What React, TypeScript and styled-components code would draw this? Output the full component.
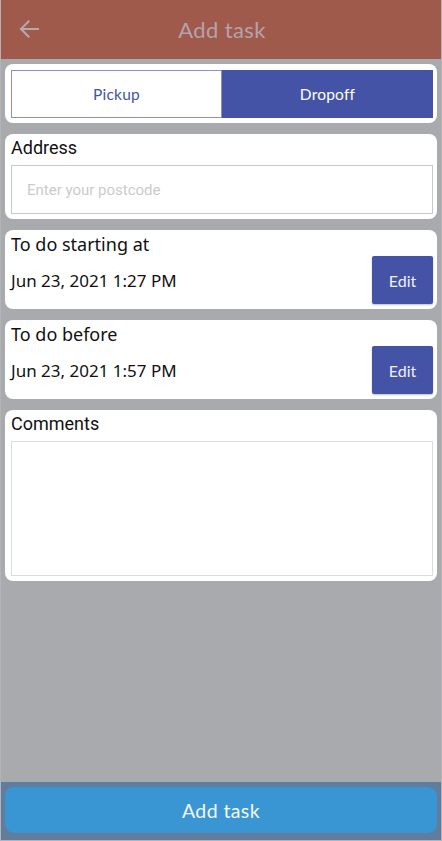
import React from "react";
import styled, { createGlobalStyle } from "styled-components";

const Global = createGlobalStyle`
  html, body { margin: 0; padding: 0; background: #a9aaad; }
  * { box-sizing: border-box; }
`;

const Frame = styled.div`
  width: 442px;
  height: 841px;
  display: flex;
  flex-direction: column;
  background: #a9aaad;
  border-left: 1px solid #b4b3b6;
  border-right: 1px solid #b4b3b6;
  border-bottom: 1px solid #b4b3b6;
`;

const Header = styled.header`
  height: 59px;
  flex: none;
  background: #a05a4b;
  display: flex;
  align-items: center;
  justify-content: center;
  position: relative;
`;

const BackButton = styled.button`
  position: absolute;
  left: 16px;
  top: 17px;
  width: 24px;
  height: 24px;
  padding: 0;
  border: none;
  background: transparent;
  display: flex;
  align-items: center;
  justify-content: center;
`;

const Title = styled.h1`
  margin: 0 0 0 2px;
  font-family: "Lato", "Open Sans", sans-serif;
  font-weight: 400;
  font-size: 22px;
  letter-spacing: 0.4px;
  color: #b3a3ac;
`;

const Content = styled.main`
  flex: 1;
  display: flex;
  flex-direction: column;
  gap: 11px;
  padding: 5px 4px 0 4px;
`;

const Card = styled.section<{ $h: number }>`
  background: #fff;
  border-radius: 8px;
  height: ${(p) => p.$h}px;
  padding: 6px 4px 5px 6px;
  display: flex;
  flex-direction: column;
`;

const Segmented = styled.div`
  display: grid;
  grid-template-columns: 1fr 1fr;
  height: 48px;
`;

const Segment = styled.button<{ $active?: boolean }>`
  border: 1px solid ${(p) => (p.$active ? "#4453a6" : "#8a90cf")};
  background: ${(p) => (p.$active ? "#4453a6" : "#fff")};
  color: ${(p) => (p.$active ? "#fff" : "#4453a6")};
  font-family: "Lato", "Open Sans", sans-serif;
  font-size: 15.5px;
  font-weight: 400;
  letter-spacing: 0.2px;
  padding: 0;
`;

const Label = styled.div<{ $font?: string }>`
  font-family: ${(p) => p.$font || "Roboto"}, sans-serif;
  font-size: 18px;
  color: #111;
  line-height: 20px;
  height: 20px;
  margin-top: -2px;
`;

const Input = styled.input`
  margin-top: 7px;
  height: 49px;
  border: 1px solid #c9c9c9;
  padding: 0 15px;
  font-family: Roboto, sans-serif;
  font-size: 15px;
  color: #222;
  outline: none;
  &::placeholder { color: #cbcbcb; }
`;

const DateRow = styled.div`
  display: flex;
  align-items: center;
  justify-content: space-between;
  margin-top: 2px;
`;

const DateText = styled.div`
  font-family: "Noto Sans", sans-serif;
  font-size: 17px;
  color: #111;
`;

const EditButton = styled.button`
  width: 61px;
  height: 48px;
  border: none;
  border-radius: 2px;
  background: #4453a6;
  color: #eef;
  font-family: "Lato", "Open Sans", sans-serif;
  font-size: 16px;
  box-shadow: 0 1px 2px rgba(0, 0, 0, 0.25);
  padding: 0;
`;

const TextArea = styled.textarea`
  margin-top: 7px;
  height: 135px;
  border: 1px solid #dcdcdc;
  resize: none;
  outline: none;
  font-family: Roboto, sans-serif;
  font-size: 15px;
`;

const Footer = styled.footer`
  height: 58px;
  flex: none;
  background: #617d9e;
  padding: 5px 4px;
`;

const SubmitButton = styled.button`
  width: 100%;
  height: 46px;
  border: none;
  border-radius: 9px;
  background: #3996d3;
  color: #f4f8fc;
  font-family: "Lato", "Open Sans", sans-serif;
  font-size: 19.5px;
  letter-spacing: 0.4px;
  padding: 0;
`;

export default function App() {
  return (
    <>
      <Global />
      <Frame>
        <Header>
          <BackButton aria-label="Back">
            <svg width="20" height="18" viewBox="0 0 20 18" fill="none">
              <path d="M19 9H2M9.5 1.5L2 9l7.5 7.5" stroke="#b7a8b0" strokeWidth="2" strokeLinecap="square" />
            </svg>
          </BackButton>
          <Title>Add task</Title>
        </Header>
        <Content>
          <Card $h={59}>
            <Segmented>
              <Segment>Pickup</Segment>
              <Segment $active>Dropoff</Segment>
            </Segmented>
          </Card>
          <Card $h={85}>
            <Label>Address</Label>
            <Input placeholder="Enter your postcode" />
          </Card>
          <Card $h={79}>
            <Label $font='"Noto Sans"'>To do starting at</Label>
            <DateRow>
              <DateText>Jun 23, 2021 1:27 PM</DateText>
              <EditButton>Edit</EditButton>
            </DateRow>
          </Card>
          <Card $h={79}>
            <Label $font='"Noto Sans"'>To do before</Label>
            <DateRow>
              <DateText>Jun 23, 2021 1:57 PM</DateText>
              <EditButton>Edit</EditButton>
            </DateRow>
          </Card>
          <Card $h={171}>
            <Label>Comments</Label>
            <TextArea />
          </Card>
        </Content>
        <Footer>
          <SubmitButton>Add task</SubmitButton>
        </Footer>
      </Frame>
    </>
  );
}
